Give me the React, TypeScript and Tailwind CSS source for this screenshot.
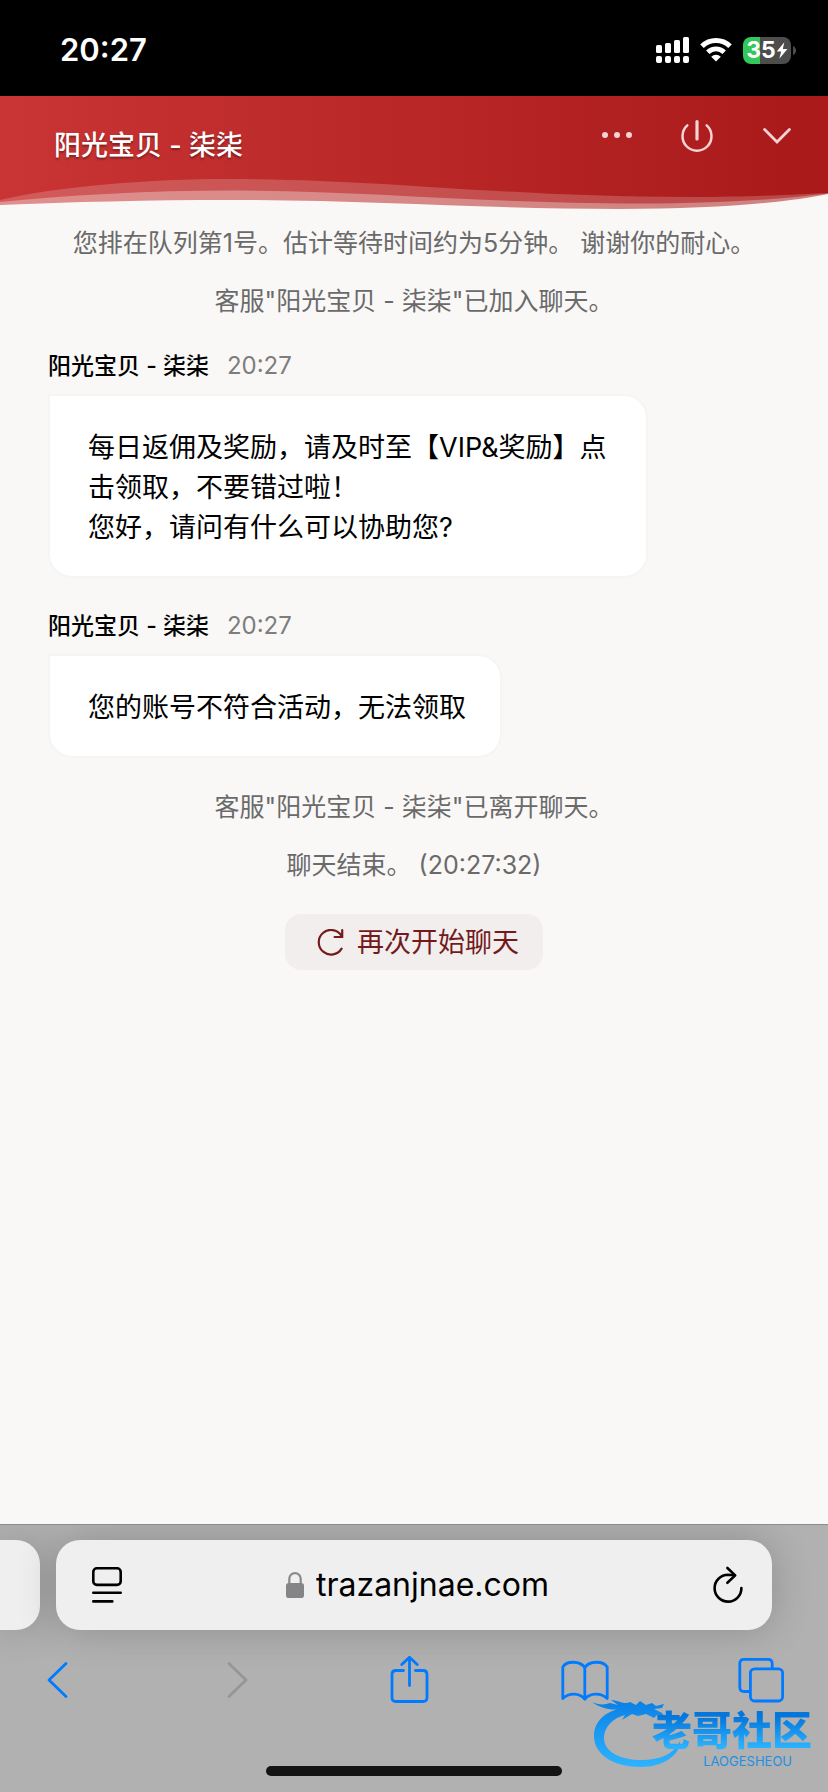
import type { ReactNode } from "react";

function StatusBar() {
  return (
    <div className="flex h-24 items-center justify-between bg-black pt-1 pr-8 pl-[60px] text-white">
      <span className="text-[31px] leading-9 font-semibold">20:27</span>
      <div className="flex items-center gap-[11px]">
        <svg width="33" height="26" viewBox="0 0 33 26" fill="#fff" aria-hidden="true">
          <rect x="0" y="8" width="6" height="8" rx="1.5" />
          <rect x="9" y="6" width="6" height="10" rx="1.5" />
          <rect x="18" y="3" width="6" height="13" rx="1.5" />
          <rect x="27" y="0" width="6" height="16" rx="1.5" />
          <rect x="0" y="19" width="6" height="7" rx="2" />
          <rect x="9" y="19" width="6" height="7" rx="2" />
          <rect x="18" y="19" width="6" height="7" rx="2" />
          <rect x="27" y="19" width="6" height="7" rx="2" />
        </svg>
        <svg width="32" height="24" viewBox="0 0 32 24" fill="none" aria-hidden="true">
          <path d="M2 8.3 A20 20 0 0 1 30 8.3" stroke="#fff" strokeWidth="5" />
          <path d="M7.8 14.2 A11.6 11.6 0 0 1 24.2 14.2" stroke="#fff" strokeWidth="4.8" />
          <path d="M16 23.6 L11.2 18.8 A6.8 6.8 0 0 1 20.8 18.8 Z" fill="#fff" />
        </svg>
        <div className="flex items-center gap-0.5">
          <div className="flex h-[27px] w-12 items-center justify-center rounded-lg bg-linear-to-r from-[#34c759] from-35% to-[#4d4d4d] to-35%">
            <span className="text-[23px] leading-[27px] font-bold">35</span>
            <svg width="12" height="19" viewBox="0 0 13 19" fill="#fff" aria-hidden="true">
              <path d="M9 0.5 L0.8 10.6 H5.6 L3.6 18.5 L12.4 7.8 H7.4 Z" />
            </svg>
          </div>
          <svg width="3" height="9" viewBox="0 0 3 9" fill="#4d4d4d" aria-hidden="true">
            <path d="M0 0 Q3 1.5 3 4.5 Q3 7.5 0 9 Z" />
          </svg>
        </div>
      </div>
    </div>
  );
}

function HeaderButton({ label, children }: { label: string; children: ReactNode }) {
  return (
    <button type="button" aria-label={label} className="flex size-12 items-center justify-center text-[#f3d3d3]">
      {children}
    </button>
  );
}

function ChatHeader() {
  return (
    <header className="relative flex h-[114px] items-start justify-between bg-linear-to-r from-[#c93434] via-[#b92727] to-[#aa1919] pr-[27px] pl-[54px]">
      <h1 className="pt-[26px] text-[27px] leading-[48px] font-medium text-white text-shadow-[0_2px_2px_rgba(0,0,0,0.35)]">
        阳光宝贝 - 柒柒
      </h1>
      <nav className="flex gap-8 pt-[15px]">
        <HeaderButton label="更多">
          <svg width="30" height="6" viewBox="0 0 30 6" fill="currentColor">
            <circle cx="3" cy="3" r="3" />
            <circle cx="15" cy="3" r="3" />
            <circle cx="27" cy="3" r="3" />
          </svg>
        </HeaderButton>
        <HeaderButton label="结束聊天">
          <svg width="34" height="34" viewBox="0 0 34 34" fill="none" stroke="currentColor" strokeLinecap="round">
            <path d="M7.3 7.4 A14.5 14.5 0 1 0 26.7 7.4" strokeWidth="2.5" />
            <path d="M17 3.5 V21" strokeWidth="3.2" />
          </svg>
        </HeaderButton>
        <HeaderButton label="收起">
          <svg width="28" height="18" viewBox="0 0 28 18" fill="none" stroke="currentColor" strokeWidth="2.8" strokeLinecap="round">
            <path d="M1.6 3.6 L14 16 L26.4 3.6" />
          </svg>
        </HeaderButton>
      </nav>
      <svg
        className="absolute inset-x-0 bottom-0 h-[34px] w-full"
        viewBox="0 0 828 34"
        preserveAspectRatio="none"
        aria-hidden="true"
      >
        <path
          d="M0 24 C60 10 150 3 230 3 C390 3 500 21 690 21 C760 21 800 18 828 17 V34 H0 Z"
          fill="#f9f8f7"
          fillOpacity="0.2"
        />
        <path
          d="M0 26 C70 19 150 14.5 230 14.5 C370 14.5 480 27.5 640 27.5 C730 27.5 790 22 828 17.5 V34 H0 Z"
          fill="#f9f8f7"
          fillOpacity="0.33"
        />
        <path
          d="M0 29 C70 26 150 24 230 24 C370 24 480 33 620 33 C720 33 790 26 828 18 V34 H0 Z"
          fill="#f9f8f7"
        />
      </svg>
    </header>
  );
}

function SystemNotes({ lines }: { lines: string[] }) {
  return (
    <div className="flex flex-col gap-6 text-center text-[25px] leading-[34px] text-[#6a6a6a]">
      {lines.map((line) => (
        <p key={line}>{line}</p>
      ))}
    </div>
  );
}

function Message({ author, time, lines }: { author: string; time: string; lines: string[] }) {
  return (
    <article className="flex flex-col items-start gap-3 px-12">
      <div className="flex items-center gap-[18px] leading-8">
        <span className="text-[23px] font-medium text-black">{author}</span>
        <time className="text-[24px] text-[#7d7d7d]">{time}</time>
      </div>
      <div className="max-w-[600px] rounded-3xl rounded-tl-none border-2 border-[#f5f5f6] bg-white pt-8 pr-[34px] pb-7 pl-[38px] text-[27px] leading-10 text-black">
        {lines.map((line) => (
          <p key={line}>{line}</p>
        ))}
      </div>
    </article>
  );
}

function Chat() {
  return (
    <main className="flex flex-1 flex-col gap-8 bg-[#f9f8f7] pt-4 pb-8">
      <SystemNotes
        lines={["您排在队列第1号。估计等待时间约为5分钟。 谢谢你的耐心。", '客服"阳光宝贝 - 柒柒"已加入聊天。']}
      />
      <Message
        author="阳光宝贝 - 柒柒"
        time="20:27"
        lines={["每日返佣及奖励，请及时至【VIP&奖励】点击领取，不要错过啦！", "您好，请问有什么可以协助您?"]}
      />
      <Message author="阳光宝贝 - 柒柒" time="20:27" lines={["您的账号不符合活动，无法领取"]} />
      <SystemNotes lines={['客服"阳光宝贝 - 柒柒"已离开聊天。', "聊天结束。 (20:27:32)"]} />
      <button
        type="button"
        className="flex h-14 items-center gap-3 self-center rounded-2xl bg-[#f2eeed] pt-0.5 pr-6 pl-8 text-[27px] leading-10 text-[#741a1c]"
      >
        <svg width="28" height="28" viewBox="0 0 28 28" fill="none" stroke="currentColor" strokeWidth="2.2" strokeLinecap="round" aria-hidden="true">
          <path d="M24.6 19.6 A12.3 12.3 0 1 1 24.4 6.6" />
          <path d="M25.2 1.2 V8 H17.6" />
        </svg>
        再次开始聊天
      </button>
    </main>
  );
}

function ToolButton({ label, disabled, children }: { label: string; disabled?: boolean; children: ReactNode }) {
  return (
    <button type="button" aria-label={label} disabled={disabled} className="text-[#007aff] disabled:text-[#969696]">
      <svg width="48" height="48" viewBox="0 0 48 48" fill="none" stroke="currentColor" strokeWidth="2.8" strokeLinecap="round" strokeLinejoin="round">
        {children}
      </svg>
    </button>
  );
}

function Watermark() {
  return (
    <div className="absolute right-4 bottom-6 flex items-end" aria-hidden="true">
      <svg className="-mr-8" width="92" height="72" viewBox="0 0 92 72" fill="none">
        <defs>
          <linearGradient id="dragon" x1="0" y1="0" x2="0" y2="1">
            <stop offset="0" stopColor="#0a7fe6" />
            <stop offset="1" stopColor="#2db4ff" />
          </linearGradient>
        </defs>
        <path
          fill="url(#dragon)"
          d="M0 6 C6 9 13 9 18 7 L26 9 L19 4 C28 5 33 9 38 6 L44 9 L48 5 L54 9 L60 7 L64 10 L72 8 L70 12 L62 13 L70 17 L72 20 L65 19 L62 22 L54 18 L46 20 L40 18 L30 24 L33 19 C21 22 12 31 12 42 C12 56 28 64 50 64 C68 64 82 58 88 45 C88 60 70 71 49 71 C22 71 2 59 2 40 C2 25 14 15 28 13 C20 15 8 12 0 6 Z"
        />
      </svg>
      <div className="flex flex-col items-end">
        <span className="bg-linear-to-b from-[#0577dc] from-20% to-[#2bb2ff] to-85% bg-clip-text text-[40px] leading-[46px] font-black text-transparent">
          老哥社区
        </span>
        <span className="pr-5 text-[13px] leading-[14px] text-[#1f8fe0]">LAOGESHEOU</span>
      </div>
    </div>
  );
}

function BrowserBar() {
  return (
    <footer className="relative flex flex-col overflow-hidden border-t border-[#8c8c8c] bg-[#b1b1b1] pt-[15px] pb-4">
      <div className="flex h-[90px] gap-4 pr-14">
        <div className="w-10 rounded-r-3xl bg-[#efefef] shadow-[0_0_40px_rgba(0,0,0,0.2)]" />
        <div className="flex flex-1 items-center justify-between rounded-3xl bg-[#efefef] pr-5 pl-[27px] shadow-[0_0_40px_rgba(0,0,0,0.2)]">
          <button type="button" aria-label="页面设置" className="flex size-12 items-center justify-center">
            <svg width="30" height="36" viewBox="0 0 30 36" fill="none" stroke="#000" strokeWidth="2.6" strokeLinecap="round">
              <rect x="1.3" y="1.3" width="27.4" height="16.6" rx="3.6" />
              <path d="M1.3 25.8 H28.7 M1.3 34.4 H20.3" />
            </svg>
          </button>
          <div className="flex items-center gap-3">
            <svg width="18" height="26" viewBox="0 0 18 26" aria-hidden="true">
              <path d="M3.3 12 V6.8 A5.7 5.7 0 0 1 14.7 6.8 V12" fill="none" stroke="#8a8a8c" strokeWidth="2.2" />
              <rect x="0" y="11" width="18" height="15" rx="2.8" fill="#858587" />
            </svg>
            <input
              type="text"
              aria-label="地址"
              defaultValue="trazanjnae.com"
              className="field-sizing-content bg-transparent text-[32px] leading-10 text-black outline-none"
            />
          </div>
          <button type="button" aria-label="重新载入" className="flex size-12 items-center justify-center">
            <svg width="30" height="38" viewBox="0 0 30 38" fill="none" stroke="#000" strokeWidth="2.6" strokeLinecap="round" strokeLinejoin="round">
              <path d="M28.4 22 A13.4 13.4 0 1 1 15 8.8 L21 9.2" />
              <path d="M14.4 2 L22.2 9.4 L14.4 16.8" />
            </svg>
          </button>
        </div>
      </div>
      <nav className="mt-5 flex h-[60px] items-center justify-between pr-[43px] pl-[33px]">
        <ToolButton label="后退">
          <path d="M33 7.5 L16 24 L33 40.5" />
        </ToolButton>
        <ToolButton label="前进" disabled>
          <path d="M20 7.5 L37 24 L20 40.5" />
        </ToolButton>
        <ToolButton label="分享">
          <path d="M18.5 14.5 H11 Q7 14.5 7 18.5 V41.5 Q7 45.5 11 45.5 H38 Q42 45.5 42 41.5 V18.5 Q42 14.5 38 14.5 H30.5" />
          <path d="M24.5 29.5 V1.5 M16.8 8.5 L24.5 1.2 L32.2 8.5" />
        </ToolButton>
        <ToolButton label="书签">
          <path d="M1.8 42.5 V11 C5.5 4.6 19 4.6 23.8 11.5 C28.5 4.6 42 4.6 46.2 11 V42.5 C40 36.5 29 36.8 23.8 43 C18.5 36.8 8 36.5 1.8 42.5 Z" />
          <path d="M23.8 11.5 V43" />
        </ToolButton>
        <ToolButton label="标签页">
          <path d="M12 35.5 H7 Q2.8 35.5 2.8 31.3 V7.6 Q2.8 3.4 7 3.4 H31 Q35.2 3.4 35.2 7.6 V12.5" />
          <rect x="13.4" y="12.8" width="32.2" height="32.2" rx="4.2" />
        </ToolButton>
      </nav>
      <div className="mt-14 h-2.5 w-[296px] self-center rounded-full bg-[#141414]" />
      <Watermark />
    </footer>
  );
}

export default function App() {
  return (
    <div className="flex min-h-screen flex-col font-['Inter','Noto_Sans_CJK_SC',sans-serif]">
      <StatusBar />
      <ChatHeader />
      <Chat />
      <BrowserBar />
    </div>
  );
}
